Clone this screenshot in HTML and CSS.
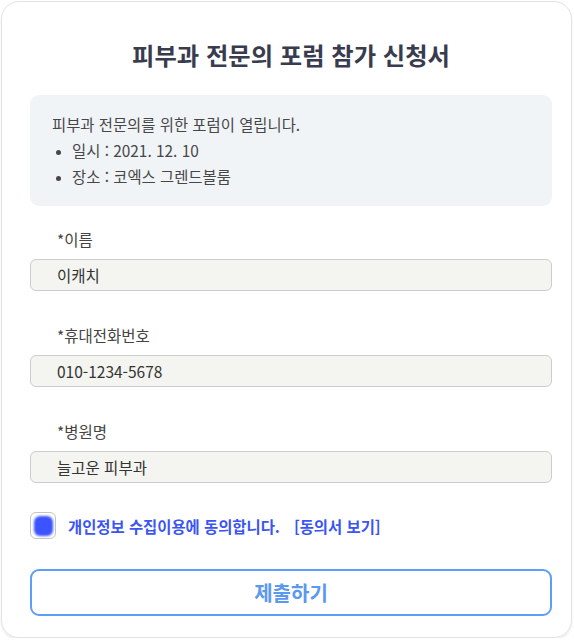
FILE: index.html
```html
<!DOCTYPE html>
<html lang="ko">
<head>
    <meta charset="UTF-8">
    <meta name="viewport" content="width=device-width, initial-scale=1.0">
    <title>피부과 전문의 포럼 참가 신청서</title>
    <link rel="stylesheet" href="styles.css">
</head>
<body>
    <div class="card">
        <h1>피부과 전문의 포럼 참가 신청서</h1>

        <div class="info-box">
            <p>피부과 전문의를 위한 포럼이 열립니다.</p>
            <ul>
                <li>일시 : 2021. 12. 10</li>
                <li>장소 : 코엑스 그렌드볼룸</li>
            </ul>
        </div>

        <form class="apply-form">
            <div class="field">
                <label for="name">*이름</label>
                <input type="text" id="name" value="이캐치">
            </div>
            <div class="field">
                <label for="phone">*휴대전화번호</label>
                <input type="text" id="phone" value="010-1234-5678">
            </div>
            <div class="field">
                <label for="hospital">*병원명</label>
                <input type="text" id="hospital" value="늘고운 피부과">
            </div>

            <div class="agree">
                <span class="check-box"><span class="check-fill"></span></span>
                <span class="agree-text">개인정보 수집이용에 동의합니다.</span>
                <a class="agree-link">[동의서 보기]</a>
            </div>

            <button type="button" class="submit-button">제출하기</button>
        </form>
    </div>
</body>
</html>
```

FILE: styles.css
```css
* {
    box-sizing: border-box;
}

body {
    margin: 0;
    font-family: "Noto Sans CJK KR", "Noto Sans", sans-serif;
    color: #444;
    background-color: #fff;
}

.card {
    margin: 1px 2px 0 1px;
    height: 637px;
    padding: 29px 19px 0 28px;
    border: 1px solid #e2e2e2;
    border-radius: 18px;
    box-shadow: 0 2px 2px rgba(0,0,0,0.08);
}

h1 {
    margin: 0 0 16px;
    text-align: center;
    font-size: 24.3px;
    line-height: 48px;
    font-weight: 700;
    color: #383c4e;
}

.info-box {
    background-color: #f1f4f7;
    border-radius: 9px;
    padding: 16px 22px 0;
    height: 111px;
    font-size: 15.4px;
    line-height: 26px;
    color: #474747;
}

.info-box p {
    margin: 0;
}

.info-box ul {
    margin: 0;
    padding-left: 20px;
}

.info-box li::marker {
    font-size: 12px;
}

.apply-form {
    display: flex;
    flex-direction: column;
    padding-top: 21px;
}

.field {
    display: flex;
    flex-direction: column;
    margin-bottom: 32px;
}

.field label {
    padding-left: 27px;
    font-size: 15.5px;
    line-height: 24px;
    color: #444;
    margin-bottom: 8px;
}

.field input {
    width: 522px;
    height: 32px;
    padding: 0 0 0 26px;
    border: 1px solid #cdcdcb;
    border-radius: 6px;
    background-color: #f4f4f1;
    font-family: inherit;
    font-size: 15.5px;
    color: #333;
}

.agree {
    display: flex;
    align-items: center;
    margin-top: -3px;
    font-size: 15.4px;
    font-weight: 700;
    color: #3a55f4;
}

.check-box {
    display: flex;
    align-items: center;
    justify-content: center;
    width: 26px;
    height: 27px;
    border: 1px solid #c4c4c4;
    border-radius: 6px;
    background-color: #fff;
    margin-right: 12px;
}

.check-fill {
    width: 19px;
    height: 20px;
    border-radius: 6px;
    background-color: #3d53ff;
    filter: blur(1.2px);
}

.agree-link {
    margin-left: 14px;
}

.submit-button {
    margin-top: 30px;
    width: 522px;
    height: 47px;
    border: 2px solid #5d9ef6;
    border-radius: 9px;
    background-color: #fff;
    font-family: inherit;
    font-size: 20px;
    font-weight: 700;
    color: #5b98ef;
}
```
